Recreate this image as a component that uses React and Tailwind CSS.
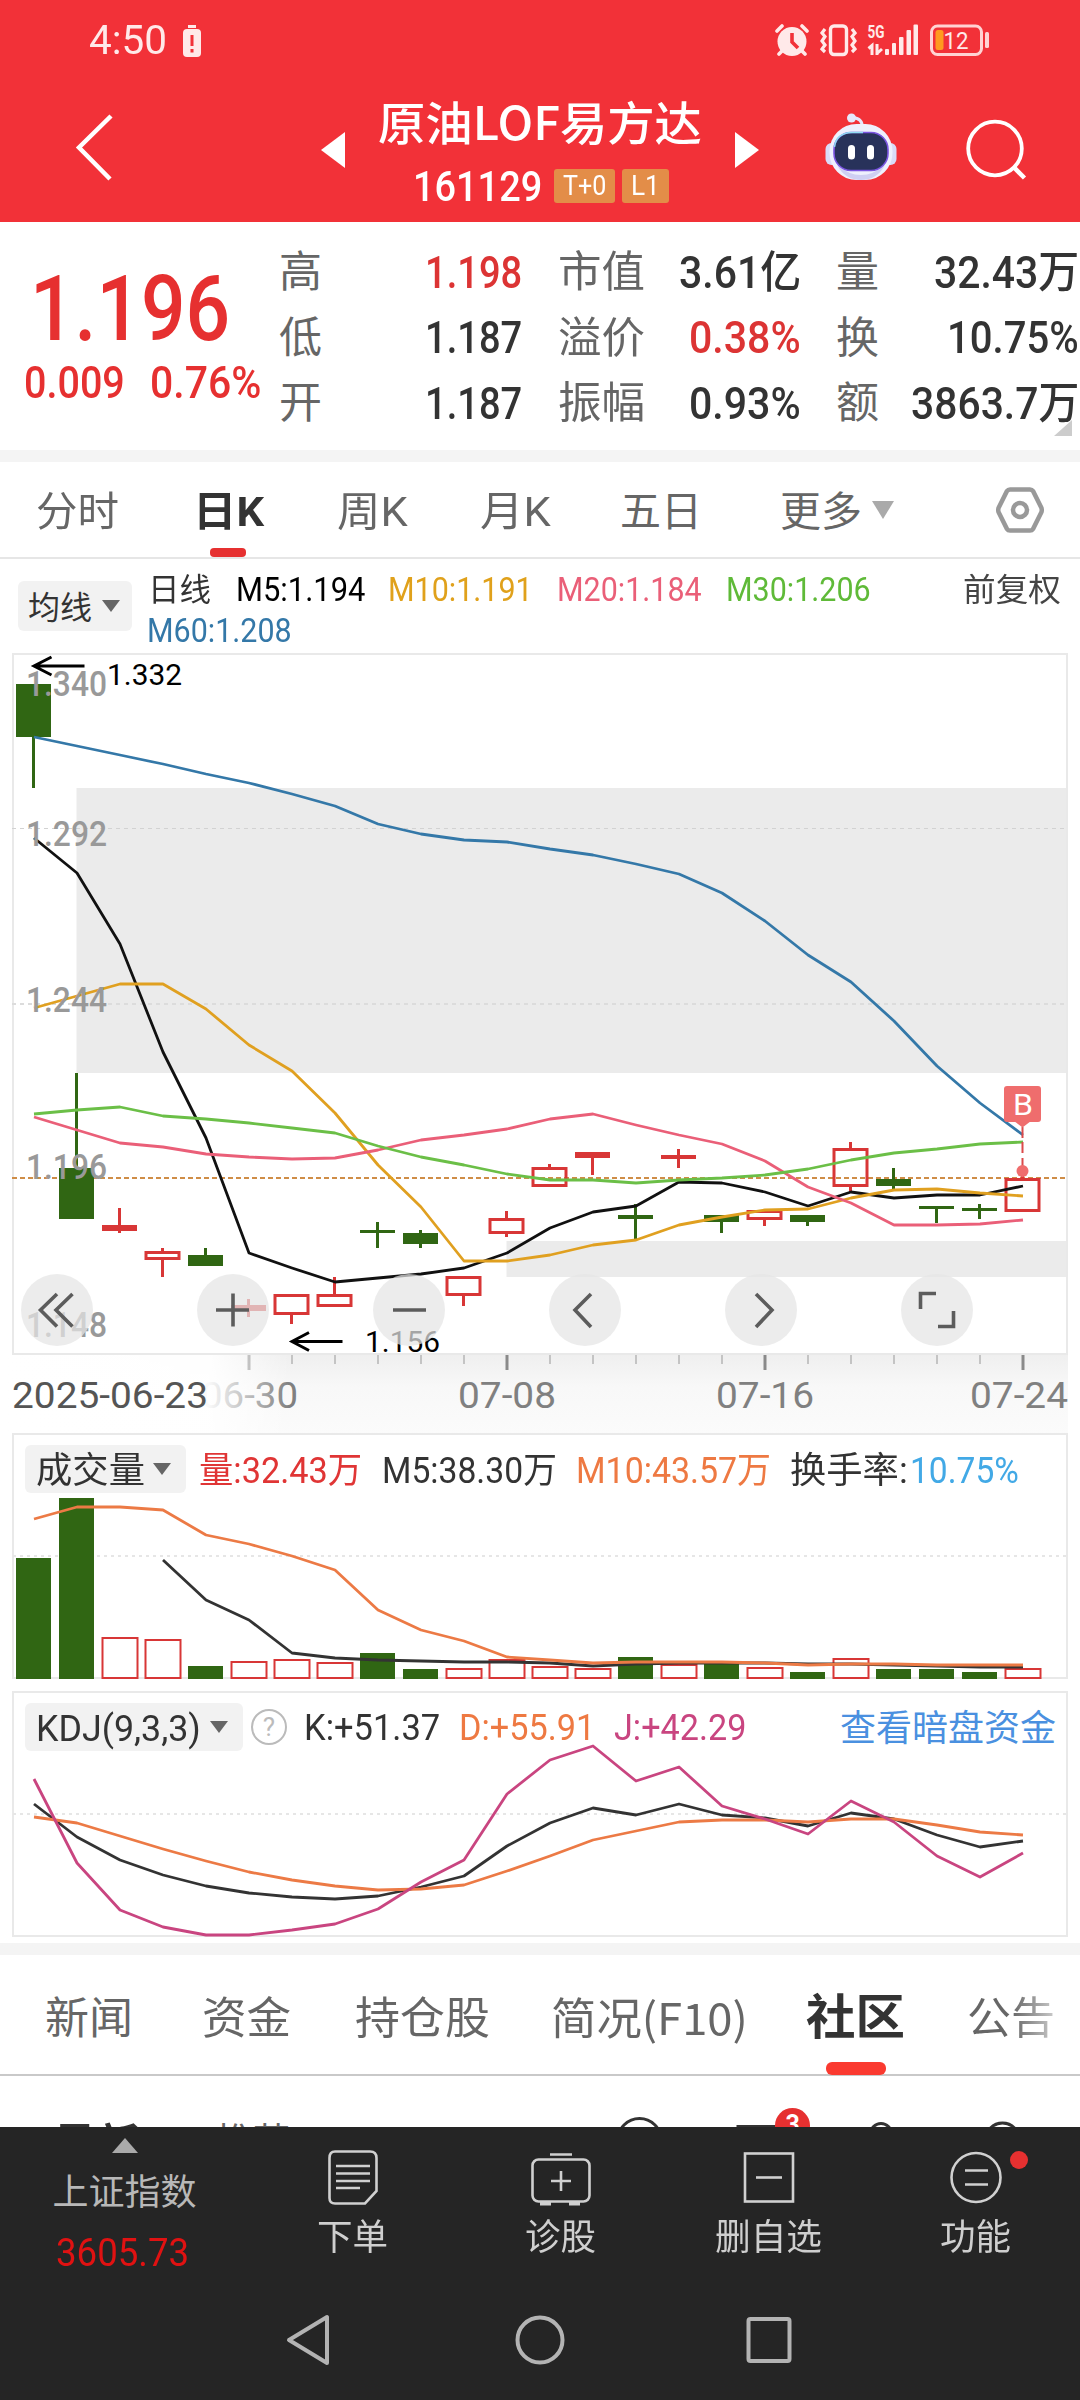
import React, { useLayoutEffect, useRef } from "react";

const STEP = 43;
const cx = (i) => 33.5 + STEP * i;

const GREEN = "#306613";
const RED = "#d83636";

// [color, high, top, bottom, low, hollow]
const candles = [
  [GREEN, 684, 684, 737, 788],
  [GREEN, 1073, 1168, 1219, 1219],
  [RED, 1208, 1225, 1231, 1233],
  [RED, 1248, 1251, 1260, 1277, true],
  [GREEN, 1248, 1255, 1266, 1266],
  [RED, 1299, 1305, 1311, 1317],
  [RED, 1294, 1294, 1315, 1324, true],
  [RED, 1277, 1294, 1307, 1307, true],
  [GREEN, 1222, 1230, 1233, 1248],
  [GREEN, 1230, 1233, 1244, 1248],
  [RED, 1276, 1276, 1296, 1306, true],
  [RED, 1211, 1218, 1234, 1237, true],
  [RED, 1164, 1167, 1187, 1187, true],
  [RED, 1152, 1152, 1158, 1175],
  [GREEN, 1204, 1215, 1219, 1239],
  [RED, 1149, 1155, 1159, 1168],
  [GREEN, 1215, 1215, 1222, 1233],
  [RED, 1210, 1210, 1220, 1226, true],
  [GREEN, 1215, 1215, 1222, 1226],
  [RED, 1142, 1148, 1187, 1192, true],
  [GREEN, 1168, 1179, 1186, 1189],
  [GREEN, 1206, 1206, 1209, 1223],
  [GREEN, 1204, 1208, 1211, 1219],
  [RED, 1171, 1178, 1212, 1212, true],
];

const ma5 = [838, 873, 944, 1052, 1138, 1253, 1268, 1282, 1278, 1274, 1268, 1253, 1228, 1212, 1206, 1182, 1183, 1192, 1206, 1192, 1198, 1195, 1195, 1186];
const ma10 = [1008, 996, 984, 984, 1009, 1045, 1071, 1113, 1165, 1207, 1261, 1261, 1255, 1245, 1240, 1225, 1217, 1210, 1209, 1198, 1190, 1189, 1193, 1196];
const ma20 = [1117, 1130, 1143, 1147, 1154, 1157, 1159, 1158, 1150, 1140, 1135, 1129, 1119, 1114, 1125, 1135, 1144, 1161, 1187, 1203, 1225, 1225, 1224, 1220];
const ma30 = [1114, 1110, 1107, 1116, 1119, 1123, 1128, 1133, 1146, 1157, 1165, 1174, 1180, 1180, 1183, 1180, 1178, 1175, 1169, 1160, 1153, 1149, 1144, 1142];
const ma60 = [737, 746, 755, 764, 774, 783, 794, 806, 824, 834, 840, 842, 849, 855, 864, 874, 893, 921, 955, 982, 1021, 1066, 1103, 1135];

// tops of the volume bars, r = up day
const volumes = [
  "g1558", "g1498", "r1637", "r1639", "g1666", "r1661", "r1659", "r1662", "g1653", "g1669", "r1668", "r1659",
  "r1666", "r1668", "g1657", "r1664", "g1664", "r1667", "g1672", "r1658", "g1669", "g1669", "g1672", "r1668",
];
const vol5 = [1560, 1600, 1620, 1653, 1658, 1660, 1661, 1662, 1662, 1663, 1666, 1664, 1663, 1663, 1663, 1664, 1664, 1665, 1666, 1667, 1667];
const vol10 = [1519, 1507, 1507, 1510, 1535, 1544, 1556, 1570, 1610, 1630, 1641, 1657, 1660, 1663, 1662, 1662, 1662, 1663, 1665, 1664, 1664, 1665, 1665, 1665];

const kLine = [1804, 1837, 1860, 1875, 1886, 1893, 1897, 1899, 1896, 1887, 1876, 1846, 1823, 1808, 1815, 1804, 1815, 1818, 1826, 1813, 1819, 1835, 1847, 1841];
const dLine = [1817, 1823, 1836, 1849, 1861, 1872, 1880, 1886, 1890, 1889, 1885, 1871, 1856, 1840, 1831, 1822, 1820, 1820, 1822, 1819, 1819, 1825, 1832, 1835];
const jLine = [1779, 1863, 1910, 1927, 1935, 1935, 1930, 1924, 1909, 1882, 1860, 1794, 1760, 1746, 1781, 1767, 1806, 1819, 1834, 1801, 1822, 1856, 1877, 1853];

const quotes = [
  [["高", 43, "1.198", 97, true], ["市值", 87, "3.61亿", 122], ["量", 43, "32.43万", 145]],
  [["低", 43, "1.187", 97], ["溢价", 87, "0.38%", 112, true], ["换", 43, "10.75%", 132]],
  [["开", 43, "1.187", 97], ["振幅", 87, "0.93%", 112], ["额", 43, "3863.7万", 168]],
];

const priceLabels = [["1.340", 696], ["1.292", 846], ["1.244", 1012], ["1.196", 1179], ["1.148", 1337]];

// Squeezes its text to the given width
function Fit({ w, className = "", children }) {
  const ref = useRef(null);
  useLayoutEffect(() => {
    const el = ref.current;
    el.style.transform = `scaleX(${w / el.offsetWidth})`;
  }, [w]);
  return (
    <span className={`block shrink-0 whitespace-nowrap leading-none ${className}`} style={{ width: w }}>
      <span ref={ref} className="inline-block origin-left">{children}</span>
    </span>
  );
}

function Line({ data, color, from = 0, width = 2.8 }) {
  const points = data.map((y, i) => `${cx(i + from) + 0.5},${y}`).join(" ");
  return <polyline points={points} fill="none" stroke={color} strokeWidth={width} strokeLinejoin="round" />;
}

function SvgText({ x, y, w, size, color, weight = 400, children }) {
  return (
    <text x={x} y={y} textLength={w} lengthAdjust="spacingAndGlyphs" fontSize={size} fill={color} fontWeight={weight}>
      {children}
    </text>
  );
}

function Caret({ className }) {
  return (
    <svg viewBox="0 0 18 12" className={className} preserveAspectRatio="none">
      <path d="M0 0H18L9 12Z" fill="currentColor" />
    </svg>
  );
}

function StatusBar() {
  return (
    <div className="flex h-[81px] items-center text-[#ffe9e9]">
      <Fit w={78} className="ml-[89px] text-[41px]">4:50</Fit>
      <svg viewBox="0 0 20 34" className="ml-[15px] h-[34px] w-5">
        <rect x="6" y="1" width="8" height="3" fill="currentColor" />
        <rect x="1" y="5" width="18" height="28" rx="4" fill="currentColor" />
        <path d="M10 11V22M10 25V28.500" stroke="#f23138" strokeWidth="3" />
      </svg>
      <svg viewBox="0 0 36 34" className="ml-[572px] h-[34px] w-9">
        <circle cx="18" cy="17.500" r="14.500" fill="currentColor" />
        <path d="M3 7L8 2M33 7L28 2M8 27L5 30M28 27L31 30" stroke="currentColor" strokeWidth="3.600" strokeLinecap="round" fill="none" />
        <path d="M18 9V18L24 24" stroke="#f23138" strokeWidth="3.600" fill="none" />
      </svg>
      <svg viewBox="0 0 38 34" className="ml-[9px] h-[34px] w-[38px]" fill="none" stroke="currentColor" strokeWidth="3.400">
        <rect x="11.500" y="2" width="16" height="28.500" rx="3.500" />
        <path d="M6 5L3 9L6 12.500L3 17L6 21L3 25L6 28M33 5L36 9L33 12.500L36 17L33 21L36 25L33 28" strokeWidth="3.200" />
      </svg>
      <svg viewBox="0 0 52 34" className="ml-[10px] h-[34px] w-[52px]" fill="currentColor">
        <text x="0.500" y="13.500" fontSize="18" fontWeight="700" textLength="17" lengthAdjust="spacingAndGlyphs">5G</text>
        <path d="M1.500 24.500L5 21.500V31M10 20V31M10 29.500L15 25" fill="none" stroke="currentColor" strokeWidth="3" />
        <rect x="18" y="25" width="4" height="6" rx="1" />
        <rect x="25" y="19" width="4" height="12" rx="1" />
        <rect x="32" y="13" width="4.500" height="18" rx="1" />
        <rect x="39.500" y="6" width="4.500" height="25" rx="1" />
        <rect x="46.500" y="0.500" width="4.500" height="30.500" rx="1" />
      </svg>
      <svg viewBox="0 0 62 34" className="ml-[9px] h-[34px] w-[62px]">
        <rect x="3.500" y="2" width="50" height="28.500" rx="6" fill="none" stroke="#ffd3d3" strokeWidth="3" />
        <rect x="7.500" y="6" width="8" height="20" rx="2.500" fill="#ff9a1f" />
        <rect x="57" y="8" width="4" height="16" rx="1.500" fill="#ffd3d3" />
        <text x="15.500" y="24.800" fontSize="24" textLength="25" lengthAdjust="spacingAndGlyphs" fill="#ffe9e9">12</text>
      </svg>
    </div>
  );
}

function Robot() {
  return (
    <svg viewBox="0 0 72 70" className="ml-[66px] h-[70px] w-[72px]">
      <path d="M37 14Q38 6 28 4.500" stroke="#e6e6fb" strokeWidth="3" fill="none" />
      <circle cx="26.500" cy="5" r="4.500" fill="#e6e8fc" />
      <rect x="0.500" y="30" width="71" height="22" rx="6" fill="#d9dbf8" />
      <rect x="4.500" y="11" width="63" height="56" rx="27" fill="#eef0fd" />
      <path d="M12 52Q36 72 60 52Q52 67 36 67Q20 67 12 52Z" fill="#cfcff3" />
      <rect x="9" y="19.500" width="54" height="38" rx="17" fill="#28325a" stroke="#7a55e0" strokeWidth="1.600" />
      <path d="M9.500 34Q11 20 27 19.500H38" stroke="#8fdcf2" strokeWidth="1.500" fill="none" />
      <rect x="23" y="32" width="7" height="14.500" rx="3.500" fill="#fff" />
      <rect x="42" y="32" width="7" height="14.500" rx="3.500" fill="#fff" />
    </svg>
  );
}

function Header() {
  return (
    <header className="h-[222px] bg-[#f23138]">
      <StatusBar />
      <div className="flex h-[141px] items-center pb-[7px] text-white">
        <svg viewBox="0 0 44 70" className="ml-[72px] h-[70px] w-11">
          <path d="M39 3L7 34.500L38 66" fill="none" stroke="currentColor" strokeWidth="4.500" />
        </svg>
        <svg viewBox="0 0 24 36" className="mt-1 ml-[205px] h-9 w-6">
          <path d="M24 0V36L0 18Z" fill="currentColor" />
        </svg>
        <div className="flex h-full w-[390px] flex-col items-center pt-4">
          <div className="flex h-[54px] items-center">
            <Fit w={324} className="pb-2 font-['Noto_Sans_CJK_SC',sans-serif] text-[46px] font-medium">原油LOF易方达</Fit>
          </div>
          <div className="mt-[18px] ml-[2px] flex h-[34px] items-center">
            <Fit w={129} className="pt-[2px] text-[42px] font-medium">161129</Fit>
            <span className="ml-3 flex h-[34px] w-[61px] items-center justify-center rounded-[3px] bg-[#e38d48]">
              <Fit w={43} className="text-[28px]">T+0</Fit>
            </span>
            <span className="ml-[7px] flex h-[34px] w-[47px] items-center justify-center rounded-[3px] bg-[#e38d48]">
              <Fit w={29} className="text-[28px]">L1</Fit>
            </span>
          </div>
        </div>
        <svg viewBox="0 0 24 36" className="mt-1 h-9 w-6">
          <path d="M0 0V36L24 18Z" fill="currentColor" />
        </svg>
        <Robot />
        <svg viewBox="0 0 66 66" className="ml-[67px] h-[66px] w-[66px]" fill="none" stroke="currentColor" strokeWidth="3.800">
          <circle cx="31" cy="33.500" r="26.800" />
          <path d="M50 52.500L60.500 63" strokeWidth="4.500" />
        </svg>
      </div>
    </header>
  );
}

function Quote() {
  return (
    <section className="relative flex h-[228px]">
      <div className="w-[280px] pt-[41px] text-[#e63030]">
        <div className="flex h-[92px] items-center pl-[30px]">
          <Fit w={200} className="text-[91px] font-medium">1.196</Fit>
        </div>
        <div className="mt-[5px] flex h-11 items-center pl-6 text-[45px] font-medium">
          <Fit w={101}>0.009</Fit>
          <Fit w={111} className="ml-[25px]">0.76%</Fit>
        </div>
      </div>
      <div className="-ml-px flex flex-col pt-[18px]">
        {quotes.map((row, r) => (
          <div key={r} className="flex h-[65.500px] w-[800px] justify-between">
            {row.map(([label, lw, value, vw, up]) => (
              <div key={label} className="flex w-[243px] items-center justify-between">
                <Fit w={lw} className="text-[43px] text-[#666]">{label}</Fit>
                <Fit w={vw} className={`text-[44px] font-medium ${up ? "text-[#dc3434]" : "text-[#333]"}`}>{value}</Fit>
              </div>
            ))}
          </div>
        ))}
      </div>
      <svg viewBox="0 0 18 16" className="absolute right-2 bottom-[14px] h-4 w-[18px]">
        <path d="M18 0V16H0Z" fill="#ccc" />
      </svg>
    </section>
  );
}

function PeriodTabs() {
  return (
    <nav className="relative flex h-[97px] items-center border-b-2 border-[#e6e6e6] text-[41px] text-[#666]">
      <Fit w={83} className="ml-9 pt-1.5">分时</Fit>
      <Fit w={71} className="ml-[74px] pt-1.5 font-bold text-[#333]">日K</Fit>
      <Fit w={71} className="ml-[73px] pt-1.5">周K</Fit>
      <Fit w={71} className="ml-[72px] pt-1.5">月K</Fit>
      <Fit w={82} className="ml-[69px] pt-1.5">五日</Fit>
      <Fit w={82} className="ml-[78px] pt-1.5">更多</Fit>
      <Caret className="ml-[10px] h-[18px] w-[22px] text-[#aaa]" />
      <svg viewBox="0 0 48 46" className="ml-[102px] h-[46px] w-12" fill="none" stroke="#999" strokeWidth="4.500">
        <path d="M14 2.500H34Q36 2.500 37 4L45.500 21Q46 23 45.500 25L37 42Q36 43.500 34 43.500H14Q12 43.500 11 42L2.500 25Q2 23 2.500 21L11 4Q12 2.500 14 2.500Z" />
        <circle cx="24" cy="23" r="7" />
      </svg>
      <i className="absolute bottom-0 left-[210px] h-[9px] w-9 rounded bg-[#e63030]" />
    </nav>
  );
}

function MaLegend() {
  return (
    <div className="flex h-[91px]">
      <div className="mt-[22px] ml-[18px] flex h-[50px] w-[114px] items-center rounded-md bg-[#f2f2f2] text-[#333]">
        <Fit w={64} className="ml-[10px] pt-[3px] text-[32px]">均线</Fit>
        <Caret className="ml-[10px] h-3 w-[18px] text-[#666]" />
      </div>
      <div className="ml-4 text-[34px]">
        <div className="mt-[14px] flex h-8 items-center">
          <Fit w={63} className="pt-px text-[32px] text-[#333]">日线</Fit>
          <Fit w={129} className="ml-[25px] text-[#000]">M5:1.194</Fit>
          <Fit w={145} className="ml-[23px] text-[#e0a11b]">M10:1.191</Fit>
          <Fit w={145} className="ml-[24px] text-[#ea5f78]">M20:1.184</Fit>
          <Fit w={145} className="ml-[24px] text-[#5fba38]">M30:1.206</Fit>
          <Fit w={98} className="ml-[92px] pt-px text-[32px] text-[#444]">前复权</Fit>
        </div>
        <div className="mt-[9px] flex h-8 items-center">
          <Fit w={145} className="-ml-[1px] text-[#3478a8]">M60:1.208</Fit>
        </div>
      </div>
    </div>
  );
}

function KChart() {
  return (
    <svg viewBox="0 650 1080 783" className="block h-[783px] w-[1080px]">
      <defs>
        <linearGradient id="axis" x1="0" y1="0" x2="0" y2="1">
          <stop offset="0" stopColor="#efefef" />
          <stop offset="0.4" stopColor="#f8f8f8" />
          <stop offset="1" stopColor="#fbfbfb" />
        </linearGradient>
        <linearGradient id="fade" x1="0" y1="0" x2="1" y2="0">
          <stop offset="0" stopColor="#fff" />
          <stop offset="0.72" stopColor="#fff" stopOpacity="0.95" />
          <stop offset="1" stopColor="#fff" stopOpacity="0" />
        </linearGradient>
      </defs>

      <rect x="76.500" y="788" width="991" height="285" fill="#ebebeb" />
      <rect x="506.500" y="1241" width="561" height="36" fill="#ebebeb" />
      <rect x="13" y="654" width="1054" height="700" fill="none" stroke="#e9e9e9" strokeWidth="2" />
      <path d="M12 828.500H1067" stroke="#d2d2d2" strokeWidth="1" strokeDasharray="4 4" />
      <path d="M12 1004H1067" stroke="#dcdcdc" strokeWidth="2" strokeDasharray="4 4" />
      <path d="M12 1178H1067" stroke="#cf8d47" strokeWidth="2" strokeDasharray="5 3" />

      {candles.map(([color, high, top, bottom, low, hollow], i) => (
        <g key={i} stroke={color} strokeWidth="3">
          {high < top && <path d={`M${cx(i)} ${high}V${top}`} />}
          {low > bottom && <path d={`M${cx(i)} ${bottom}V${low}`} />}
          {hollow ? (
            <rect x={cx(i) - 16.5} y={top + 1.5} width="33" height={bottom - top - 3} fill="none" />
          ) : (
            <rect x={cx(i) - 17.5} y={top} width="35" height={bottom - top} fill={color} stroke="none" />
          )}
        </g>
      ))}

      <Line data={ma5} color="#111" />
      <Line data={ma10} color="#e0a020" />
      <Line data={ma20} color="#ea5f78" />
      <Line data={ma30} color="#6bbf47" />
      <Line data={ma60} color="#3478a8" />

      <g fill="none" stroke="#000" strokeWidth="3">
        <path d="M84.500 666H35M51.500 657L34 666L51.500 675" />
        <path d="M342.500 1341.500H293M309 1332.500L292 1341.500L309 1350.500" />
      </g>
      <SvgText x={107} y={685} w={75} size={30} color="#000">1.332</SvgText>
      <SvgText x={365} y={1352} w={75} size={30} color="#000">1.156</SvgText>
      {priceLabels.map(([label, y]) => (
        <SvgText key={label} x={26} y={y} w={81} size={35} weight={500} color="#999">{label}</SvgText>
      ))}

      <path d="M1022.500 1127V1138M1022.500 1142V1153M1022.500 1158V1170" stroke="#dc4a4a" strokeWidth="2" />
      <rect x="1004" y="1086" width="37" height="36" rx="3" fill="#ef6d6d" />
      <path d="M1014 1121H1031L1022.500 1127.500Z" fill="#ef6d6d" />
      <circle cx="1022.500" cy="1171" r="6" fill="#ef6d6d" />
      <SvgText x={1013} y={1115} w={20} size={30} color="#fff">B</SvgText>

      {/* time axis */}
      <rect x="0" y="1355" width="1068" height="80" fill="url(#axis)" />
      {candles.map((_, i) =>
        i < 5 ? null : (i - 5) % 6 === 0 ? (
          <path key={i} d={`M${cx(i) + 0.5} 1355V1370`} stroke="#8a8a8a" strokeWidth="3" />
        ) : (
          <path key={i} d={`M${cx(i) + 0.5} 1355V1364`} stroke="#c4c4c4" strokeWidth="2" />
        )
      )}
      <SvgText x={201} y={1408} w={97} size={36} color="#808080">06-30</SvgText>
      <rect x="0" y="1355" width="290" height="80" fill="url(#fade)" />
      <SvgText x={458} y={1408} w={98} size={36} color="#808080">07-08</SvgText>
      <SvgText x={716} y={1408} w={98} size={36} color="#808080">07-16</SvgText>
      <SvgText x={970} y={1408} w={98} size={36} color="#808080">07-24</SvgText>
      <SvgText x={12} y={1408} w={196} size={36} color="#555">2025-06-23</SvgText>

      {/* chart controls */}
      {[57, 233, 409, 585, 761, 937].map((x) => (
        <circle key={x} cx={x} cy="1310" r="36" fill="#e4e4e4" fillOpacity="0.72" />
      ))}
      <g fill="none" stroke="#5c5c5c" strokeWidth="3.600">
        <path d="M57 1294L40.500 1310L57 1326.500M72.500 1294L56 1310L72.500 1326.500" />
        <path d="M216 1310H249M233 1293.500V1326.500" />
        <path d="M393 1310H426" />
        <path d="M591 1294L575 1310L591 1327" />
        <path d="M756 1294L772 1310L756 1327" />
        <path d="M936 1293.500H920.500V1309M953.500 1311V1326.500H938" />
      </g>
    </svg>
  );
}

function Volume() {
  return (
    <section className="relative h-[258px]">
      <svg viewBox="0 1433 1080 258" className="block h-[258px] w-[1080px]">
        <rect x="13" y="1434" width="1054" height="244" fill="none" stroke="#e9e9e9" strokeWidth="2" />
        <path d="M13 1556H1067" stroke="#e6e6e6" strokeWidth="2" strokeDasharray="3 4" />
        {volumes.map((v, i) => {
          const top = Number(v.slice(1));
          return v[0] === "g" ? (
            <rect key={i} x={cx(i) - 17.5} y={top} width="35" height={1679 - top} fill={GREEN} />
          ) : (
            <rect key={i} x={cx(i) - 17} y={top + 1} width="35" height={1677 - top} fill="#fff" stroke={RED} strokeWidth="2" />
          );
        })}
        <Line data={vol5} from={3} color="#333" />
        <Line data={vol10} color="#ec7a45" />
      </svg>
      <div className="absolute top-3 left-[25px] flex h-12 items-center text-[36px]">
        <div className="flex h-12 w-[161px] items-center rounded-md bg-[#f2f2f2] text-[#333]">
          <Fit w={109} className="ml-[11px] pt-[3px]">成交量</Fit>
          <Caret className="ml-[8px] h-3 w-[18px] text-[#666]" />
        </div>
        <Fit w={163} className="ml-[13px] pt-[3px] text-[#e03535]">量:32.43万</Fit>
        <Fit w={175} className="ml-[20px] pt-[3px] text-[#333]">M5:38.30万</Fit>
        <Fit w={195} className="ml-[19px] pt-[3px] text-[#ee7942]">M10:43.57万</Fit>
        <Fit w={118} className="ml-[19px] pt-[3px] text-[#333]">换手率:</Fit>
        <Fit w={109} className="ml-[2px] pt-[3px] text-[#42a9e6]">10.75%</Fit>
      </div>
    </section>
  );
}

function Kdj() {
  return (
    <section className="relative h-[252px]">
      <svg viewBox="0 1691 1080 252" className="block h-[252px] w-[1080px]">
        <rect x="13" y="1692" width="1054" height="244" fill="none" stroke="#e9e9e9" strokeWidth="2" />
        <path d="M13 1814H1067" stroke="#e6e6e6" strokeWidth="2" strokeDasharray="3 4" />
        <Line data={kLine} color="#333" />
        <Line data={dLine} color="#ec7a45" />
        <Line data={jLine} color="#c94580" />
      </svg>
      <div className="absolute top-3 left-[25px] flex h-12 items-center text-[36px]">
        <div className="flex h-12 w-[218px] items-center rounded-md bg-[#f2f2f2] text-[#333]">
          <Fit w={165} className="ml-[11px] pt-[3px]">KDJ(9,3,3)</Fit>
          <Caret className="ml-[9px] h-3 w-[18px] text-[#666]" />
        </div>
        <span className="ml-2 flex h-9 w-9 items-center justify-center rounded-full border-2 border-[#bbb] text-[26px] leading-none text-[#bbb]">?</span>
        <Fit w={136} className="ml-[17px] pt-[2px] text-[#333]">K:+51.37</Fit>
        <Fit w={136} className="ml-[19px] pt-[2px] text-[#ee7942]">D:+55.91</Fit>
        <Fit w={132} className="ml-[19px] pt-[2px] text-[#c94580]">J:+42.29</Fit>
        <Fit w={216} className="ml-[94px] pt-[3px] text-[#4a90e0]">查看暗盘资金</Fit>
      </div>
    </section>
  );
}

function InfoTabs() {
  return (
    <nav className="relative flex h-[121px] items-center border-b-2 border-[#c9c9c9] pt-[2px] text-[44px] text-[#666]">
      <Fit w={88} className="ml-[45px] pt-1.5">新闻</Fit>
      <Fit w={89} className="ml-[69px] pt-1.5">资金</Fit>
      <Fit w={135} className="ml-[64px] pt-1.5">持仓股</Fit>
      <Fit w={197} className="ml-[61px] font-['Noto_Sans_CJK_SC',sans-serif]">简况(F10)</Fit>
      <Fit w={99} className="ml-[58px] pt-1 text-[48px] font-bold text-[#333]">社区</Fit>
      <Fit w={88} className="ml-[62px] pt-1.5">
        <span className="bg-linear-to-r from-[#666] from-50% to-[#ccc] bg-clip-text text-transparent">公告</span>
      </Fit>
      <i className="absolute -bottom-px left-[826px] h-[13px] w-[60px] rounded-md bg-[#fa3a30]" />
    </nav>
  );
}

function FeedBar() {
  return (
    <div className="relative h-[51px] overflow-hidden">
      <div className="flex pt-[48px] text-[43px]">
        <Fit w={87} className="ml-[53px] font-bold text-[#333]">最新</Fit>
        <Fit w={74} className="ml-[76px] text-[37px] text-[#666]">推荐</Fit>
      </div>
      <svg viewBox="600 2076 440 51" className="absolute top-0 left-[600px] h-[51px] w-[440px]" fill="none" stroke="#333" strokeWidth="3">
        <circle cx="639.500" cy="2140" r="21.500" />
        <rect x="738" y="2126.500" width="40" height="30" />
        <circle cx="881" cy="2134" r="10.500" />
        <circle cx="1002.500" cy="2140" r="17" />
        <circle cx="792.500" cy="2125.500" r="17.500" fill="#e63030" stroke="none" />
        <text x="785.500" y="2133" fontSize="25" fontWeight="700" fill="#fff" stroke="none">3</text>
      </svg>
    </div>
  );
}

const tools = [
  { name: "下单", width: 71, left: "ml-[120px]", icon: (
    <>
      <path d="M12 5.500H47Q53.500 5.500 53.500 12V45L42 57.500H12Q6.500 57.500 6.500 52V12Q6.500 5.500 12 5.500Z" />
      <path d="M13 20H47M13 27.500H47M13 35H47M13 42H37" />
    </>
  ) },
  { name: "诊股", width: 71, left: "ml-[137px]", icon: (
    <>
      <rect x="1.500" y="13.500" width="57" height="42" rx="6" />
      <path d="M19 8.500H41M30 25V45M20 35H40" />
      <path d="M9 57.500H20M38 57.500H49" strokeWidth="4" />
    </>
  ) },
  { name: "删自选", width: 107, left: "ml-[119px]", icon: (
    <>
      <rect x="6" y="7.500" width="48" height="48" />
      <path d="M17 31.500H43" />
    </>
  ) },
  { name: "功能", width: 71, left: "ml-[118px]", icon: (
    <>
      <circle cx="30" cy="31.500" r="24.500" />
      <path d="M19 24.500H42M19 38.500H42" />
    </>
  ) },
];

function BottomBar() {
  return (
    <footer className="h-[273px] bg-[#252525]">
      <div className="flex h-[170px] text-[36px] text-[#cfcfcf]">
        <div className="ml-[52px] flex w-[145px] flex-col items-center text-[#b8b8b8]">
          <Caret className="mt-[11px] h-[15px] w-[26px] rotate-180 text-[#aaa]" />
          <Fit w={144} className="mt-[22px]">上证指数</Fit>
          <Fit w={133} className="mt-[23px] mr-1 text-[38px] text-[#e01212]">3605.73</Fit>
        </div>
        {tools.map((tool) => (
          <div key={tool.name} className={`relative flex flex-col items-center ${tool.left}`}>
            <svg viewBox="0 0 60 62" className="mt-[19px] h-[62px] w-[60px]" fill="none" stroke="#d0d0d0" strokeWidth="2.600">
              {tool.icon}
            </svg>
            <Fit w={tool.width} className="mt-[12px]">{tool.name}</Fit>
            {tool.name === "功能" && <i className="absolute top-6 left-[70px] h-[18px] w-[18px] rounded-full bg-[#e63030]" />}
          </div>
        ))}
      </div>
      <div className="flex h-[86px] items-center">
        <svg viewBox="0 0 48 54" className="ml-[284px] h-[54px] w-12" fill="none" stroke="#b3b3b3" strokeWidth="4" strokeLinejoin="round">
          <path d="M43 4V50L5 27Z" />
        </svg>
        <svg viewBox="0 0 54 54" className="ml-[181px] h-[54px] w-[54px]" fill="none" stroke="#b3b3b3" strokeWidth="4">
          <circle cx="27" cy="27" r="22.500" />
        </svg>
        <svg viewBox="0 0 54 54" className="ml-[175px] h-[54px] w-[54px]" fill="none" stroke="#b3b3b3" strokeWidth="4">
          <rect x="6.500" y="6" width="41" height="42" rx="2" />
        </svg>
      </div>
    </footer>
  );
}

export default function App() {
  return (
    <div className="h-[2400px] w-[1080px] overflow-hidden bg-white font-['Roboto','Noto_Sans_CJK_SC',sans-serif]">
      <Header />
      <Quote />
      <div className="h-3 bg-[#f4f4f4]" />
      <PeriodTabs />
      <MaLegend />
      <KChart />
      <Volume />
      <Kdj />
      <div className="h-3 bg-[#f4f4f4]" />
      <InfoTabs />
      <FeedBar />
      <BottomBar />
    </div>
  );
}
